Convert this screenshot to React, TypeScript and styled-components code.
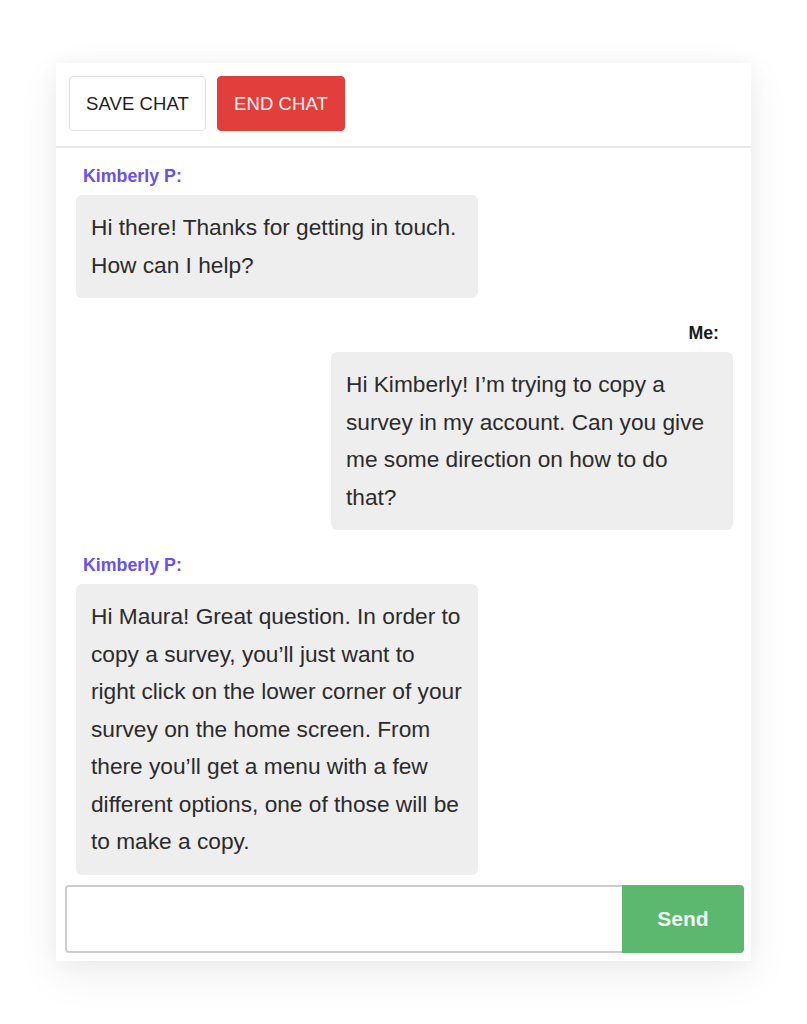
import React from "react";
import styled, { createGlobalStyle } from "styled-components";

const GlobalStyle = createGlobalStyle`
  html, body {
    margin: 0;
    padding: 0;
    background: #ffffff;
    font-family: "Liberation Sans", Arial, sans-serif;
  }
  * { box-sizing: border-box; }
`;

const Page = styled.div`
  width: 807px;
  height: 1024px;
  padding: 63px 0 0 56px;
  background: #ffffff;
`;

const Card = styled.div`
  width: 695px;
  height: 898px;
  background: #ffffff;
  display: flex;
  flex-direction: column;
  box-shadow: 0 14px 40px rgba(0, 0, 0, 0.07), 0 0 18px rgba(0, 0, 0, 0.04);
`;

const Toolbar = styled.div`
  display: flex;
  gap: 11px;
  padding: 13px 13px 15px 13px;
  border-bottom: 2px solid #e9e9e9;
`;

const ToolButton = styled.button<{ $danger?: boolean }>`
  height: 55px;
  padding: 0 16px;
  font-family: "Liberation Sans", Arial, sans-serif;
  font-size: 18.5px;
  letter-spacing: 0.1px;
  border-radius: 4px;
  cursor: pointer;
  color: ${(p) => (p.$danger ? "#fff3f1" : "#1e1e1e")};
  background: ${(p) => (p.$danger ? "#e23e3b" : "#ffffff")};
  border: 1px solid ${(p) => (p.$danger ? "#e23e3b" : "#e2e2e2")};
`;

const Messages = styled.div`
  flex: 1;
  overflow: hidden;
  display: flex;
  flex-direction: column;
  gap: 24px;
  padding: 17px 18px 0 20px;
`;

const Group = styled.div<{ $mine?: boolean }>`
  display: flex;
  flex-direction: column;
  align-items: ${(p) => (p.$mine ? "flex-end" : "flex-start")};
`;

const Sender = styled.div<{ $mine?: boolean }>`
  height: 22px;
  line-height: 22px;
  font-size: 17.8px;
  font-weight: 700;
  margin-bottom: 8px;
  color: ${(p) => (p.$mine ? "#1a1a1a" : "#6a50ec")};
  padding: ${(p) => (p.$mine ? "0 14px 0 0" : "0 0 0 7px")};
`;

const Bubble = styled.div`
  width: 402px;
  background: #eeeeee;
  border-radius: 6px;
  padding: 14px 14px 14px 15px;
  font-size: 22.7px;
  line-height: 37.5px;
  color: #2b2b2b;
  white-space: nowrap;
`;

const Composer = styled.div`
  display: flex;
  padding: 8px 7px 8px 9px;
`;

const Field = styled.input`
  flex: 1;
  height: 68px;
  border: 2px solid #cdcdcd;
  border-right: none;
  border-radius: 4px 0 0 4px;
  outline: none;
  font-family: "Liberation Sans", Arial, sans-serif;
  font-size: 20px;
  padding: 0 14px;
`;

const SendButton = styled.button`
  width: 122px;
  height: 68px;
  border: none;
  border-radius: 0 4px 4px 0;
  background: #5cb86f;
  color: #f2fbf4;
  font-family: "Liberation Sans", Arial, sans-serif;
  font-size: 21px;
  font-weight: 700;
  cursor: pointer;
`;

type Msg = { mine?: boolean; sender: string; lines: string[] };

const messages: Msg[] = [
  {
    sender: "Kimberly P:",
    lines: ["Hi there! Thanks for getting in touch.", "How can I help?"],
  },
  {
    mine: true,
    sender: "Me:",
    lines: [
      "Hi Kimberly! I\u2019m trying to copy a",
      "survey in my account. Can you give",
      "me some direction on how to do",
      "that?",
    ],
  },
  {
    sender: "Kimberly P:",
    lines: [
      "Hi Maura! Great question. In order to",
      "copy a survey, you\u2019ll just want to",
      "right click on the lower corner of your",
      "survey on the home screen. From",
      "there you\u2019ll get a menu with a few",
      "different options, one of those will be",
      "to make a copy.",
    ],
  },
];

export default function App() {
  return (
    <>
      <GlobalStyle />
      <Page>
        <Card>
          <Toolbar>
            <ToolButton>SAVE CHAT</ToolButton>
            <ToolButton $danger>END CHAT</ToolButton>
          </Toolbar>
          <Messages>
            {messages.map((m, i) => (
              <Group key={i} $mine={m.mine}>
                <Sender $mine={m.mine}>{m.sender}</Sender>
                <Bubble>
                  {m.lines.map((l, j) => (
                    <React.Fragment key={j}>
                      {l}
                      {j < m.lines.length - 1 && <br />}
                    </React.Fragment>
                  ))}
                </Bubble>
              </Group>
            ))}
          </Messages>
          <Composer>
            <Field type="text" />
            <SendButton>Send</SendButton>
          </Composer>
        </Card>
      </Page>
    </>
  );
}
